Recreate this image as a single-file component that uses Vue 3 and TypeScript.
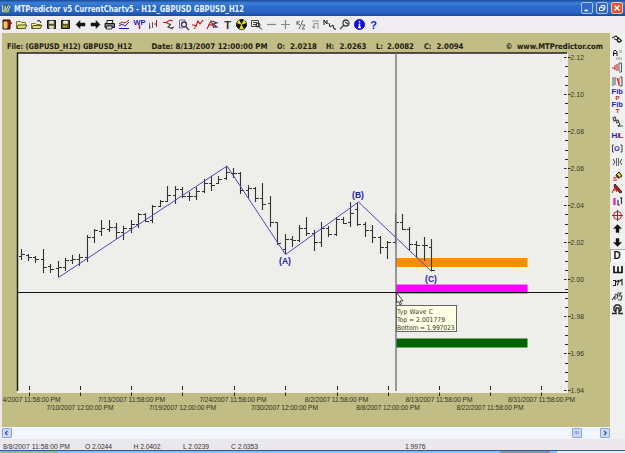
<script setup lang="ts">
interface Shape { d: string; c: string; f?: string; w?: number }
interface Glyph { t: string; x: number; y: number; c: string; s: number }
interface Icon { name: string; p?: Shape[]; g?: Glyph[] }

const K = '#151515'
const R = '#c01818'
const B = '#1c1cc8'

const tools: Icon[] = [
  { name: 'Exit', p: [{ d: 'M2 2h7v9H2z', c: K, f: '#8a2010' }, { d: 'M3 4h3v6H3z', c: '#e8c860', f: '#e8c860' }, { d: 'M11 5H7m2-2v4', c: '#b01010', w: 1.6 }] },
  { name: 'Open', p: [{ d: 'M1.5 3.5h4l1 1h4v6h-9z', c: '#77772a', f: '#f2eaa0' }, { d: 'M3 7h9l-2 3.500H2z', c: '#55551c', f: '#e5dc80' }] },
  { name: 'Open chart', p: [{ d: 'M1.5 5.5h4l1 1h4v4h-9z', c: '#77772a', f: '#f2eaa0' }, { d: 'M3 7.5h9l-2 3H2z', c: '#55551c', f: '#e5dc80' }, { d: 'M7 3q3-2 4 2', c: K }] },
  { name: 'Save', p: [{ d: 'M2.500 2.500h8v8h-8z', c: K, f: '#55551c' }, { d: 'M4.500 3h4v2.500h-4zM4.500 8h4v2.500h-4z', c: '#ddd', f: '#ddd', w: .6 }] },
  { name: 'Save as', p: [{ d: 'M2.500 2.500h8v8h-8z', c: K, f: '#55551c' }, { d: 'M4.500 3h4v2.500h-4z', c: '#eee', f: '#eee', w: .6 }, { d: 'M4 8.500h4', c: '#e0b030', w: 1.5 }] },
  { name: 'Back', p: [{ d: 'M2 6.500l4-4v2.500h5v3H6v2.500z', c: K, f: K, w: .5 }] },
  { name: 'Forward', p: [{ d: 'M11 6.500l-4-4v2.500H2v3h5v2.500z', c: K, f: K, w: .5 }] },
  { name: 'Print', p: [{ d: 'M4 5V2.500h6L9 5', c: K, f: '#fff' }, { d: 'M2 5.500h9.500v4H2z', c: K, f: '#777' }, { d: 'M4 8h5v3H3z', c: K, f: '#ddd', w: .8 }] },
  { name: 'Lines', p: [{ d: 'M1 6l3-2 3 1 4-3', c: R }, { d: 'M1 8l3-2 3 2 4-4M1 10.500h10', c: B }] },
  { name: 'Wave patterns', g: [{ t: 'WP', x: 6.5, y: 7, c: B, s: 7.5 }], p: [{ d: 'M6.500 7v4', c: R, w: 1.5 }] },
  { name: 'Bars', p: [{ d: 'M2.500 5v6M5.500 4v6M2 9h2', c: '#5c5c70' }, { d: 'M9.500 2v7M7 6h2', c: R }] },
  { name: 'Swing', p: [{ d: 'M1 4.500h3l4-2.500 3 1M4 4.500l4 2', c: R, w: 1.1 }, { d: 'M9 6l-3 3 5 2M9 10l3-1', c: '#444', w: 1.2 }] },
  { name: 'Zoom bar', p: [{ d: 'M2.500 2v8h3M3 2h5v2', c: '#66a' }, { d: 'M7 4a2.500 2.500 0 100 5 2.500 2.500 0 000-5M9 9l3 3', c: '#503050', w: 1.3 }] },
  { name: 'Wave', p: [{ d: 'M1 7h2l2 1 2-5 2 3 3-4', c: R, w: 1.2 }, { d: 'M3 11l3-4', c: R }] },
  { name: 'Analysis', p: [{ d: 'M1 11l4-8 3 7M2 7h5', c: R, w: 1.1 }, { d: 'M6 3l5 2-4 1 4 3H7', c: '#335', w: 1.1 }] },
  { name: 'Text', p: [], g: [{ t: 'T', x: 6.5, y: 10.5, c: '#2a3a2a', s: 11 }] },
  { name: 'Radar', p: [{ d: 'M6.500 1.500a5 5 0 100 10 5 5 0 000-10', c: '#111', f: '#111' }, { d: 'M6.500 6.500L2 5l2-3zM6.500 6.500L11 5 9 2zM6.500 6.500L4.500 11h4z', c: '#f4ee20', f: '#f4ee20', w: .3 }] },
  { name: 'Preview', p: [{ d: 'M1.500 2.500h7v6h-7zM3 4.500h4M3 6.500h4', c: '#444' }, { d: 'M8 5a2 2 0 100 4 2 2 0 000-4M9.500 9l2.500 2.500', c: K }] },
  { name: 'Minus', p: [{ d: 'M2 6.500h9', c: '#858585', w: 1.2 }] },
  { name: 'Plus', p: [{ d: 'M2 6.500h9M6.500 2v9', c: '#858585', w: 1.2 }] },
  { name: 'Half', p: [{ d: 'M3 3v4M6 3L3 5l3 2M9 2L5 11M8 7h3l-3 4h3', c: '#555', w: .9 }] },
  { name: 'Fit', p: [{ d: 'M3 3h7M5 5v6M5 6l4-1v6M3 9h3', c: '#888', w: .9 }] },
  { name: 'Wave count', p: [{ d: 'M1 7V2l3 4V2M6 5l1 4 3-2 1 4h2', c: K, w: 1 }] },
  { name: 'Search', p: [{ d: 'M8 2a3 3 0 100 6 3 3 0 000-6M6 7l-4 4M7 4l3 2', c: '#444', w: 1.3 }] },
  { name: 'Info', p: [{ d: 'M6.500 1.500a5 5 0 100 10 5 5 0 000-10', c: '#1010d8', f: '#1010d8' }, { d: 'M6.500 3v1.500M6.500 5.500v4M5 9.500h3', c: '#fff', w: 1.5 }] },
  { name: 'Help', g: [{ t: '?', x: 6.5, y: 10.5, c: B, s: 11 }] },
]

const sideTools: Icon[] = [
  { name: 'Pointer', p: [{ d: 'M1 4l4-2 6 5M3 5l4 1', c: '#333', w: 1.2 }, { d: 'M8 4a2 2 0 102 3', c: K, w: 1.4 }] },
  { name: 'Annotate', p: [{ d: 'M2.500 8V4l1.500-2L6 4v4M2.500 5.500h3', c: K }, { d: 'M5 10.500h6M8 3.500h3', c: '#c4c4c4', w: 3 }] },
  { name: 'Bracket left', p: [{ d: 'M1 7h3M4 4v5M6 3v7', c: R }, { d: 'M8 2v8M8 2h2.500v9H8', c: '#555' }] },
  { name: 'Bracket right', p: [{ d: 'M2 2v9M4 2v8', c: '#555' }, { d: 'M6 3l2 6M8 3v8', c: R }, { d: 'M9 2h2v9H9', c: '#444' }] },
  { name: 'Fib price', g: [{ t: 'Fib', x: 6.2, y: 6, c: B, s: 7.5 }, { t: 'P', x: 6.5, y: 11.8, c: R, s: 6 }] },
  { name: 'Fib time', g: [{ t: 'Fib', x: 6.2, y: 6, c: B, s: 7.5 }, { t: 'T', x: 6.5, y: 11.8, c: R, s: 6 }] },
  { name: 'Swing count', p: [{ d: 'M2 3l2-1 1 3-2 1zM5 6l2-1 1 2-2 1zM9 8l-1 3h4M7 10l1 2', c: '#444', w: 1.1 }] },
  { name: 'High low', g: [{ t: 'H/', x: 4.5, y: 9.5, c: B, s: 8 }, { t: 'L', x: 10, y: 9.5, c: R, s: 8 }] },
  { name: 'Range', p: [{ d: 'M3 3H1.500v7H3M9.500 3H11v7H9.500', c: '#444' }, { d: 'M6 4.500a2 2 0 100 4 2 2 0 000-4', c: '#4545d5', w: 1.2 }] },
  { name: 'Compress', p: [{ d: 'M2 4l2 3-2 3M11 4L9 7l2 3', c: '#444' }, { d: 'M5.500 3v8M7.500 3v8', c: '#666' }] },
  { name: 'Sell marker', p: [{ d: 'M5 6l3-3 3 4-3 2z', c: K, f: '#eadb15' }, { d: 'M5 6l3 3', c: '#502010', w: 2 }], g: [{ t: 'S', x: 4, y: 11.5, c: '#d02020', s: 6 }] },
  { name: 'Alert marker', p: [{ d: 'M4 2l7 8-2 1-6-7z', c: '#501818', f: '#b02020' }, { d: 'M1 11l3-6 2 5M2 8h4', c: R }] },
  { name: 'Bars', p: [{ d: 'M3.500 3v7', c: '#d020d0', w: 2.2 }, { d: 'M7 10.500V5M7 10h2M10.500 2v7M9 3h1.500', c: '#334', w: 1.2 }] },
  { name: 'Target', p: [{ d: 'M6.500 2.500a4 4 0 100 8 4 4 0 000-8M1 6.500h11', c: R }, { d: 'M6.500 1v11', c: '#444' }] },
  { name: 'Up', p: [{ d: 'M6.500 2.500l4 4H8v4H5v-4H2.500z', c: K, f: K, w: .4 }] },
  { name: 'Down', p: [{ d: 'M6.500 10.500l4-4H8v-4H5v4H2.500z', c: K, f: K, w: .4 }] },
  { name: 'Daily', g: [{ t: 'D', x: 6, y: 10.3, c: K, s: 10 }] },
  { name: 'Weekly', p: [{ d: 'M3 3v6.500h8V3M7 3.500v6', c: K, w: 1.7 }] },
  { name: 'Monthly', p: [{ d: 'M2 4.500h2.500v5H2M4.500 6l3-1.500-1 5M8 5.500l3-2v6', c: '#222', w: 1.1 }] },
  { name: 'Minutes', p: [{ d: 'M1 10l3-4v4M4 4l2 1M6 9l1-6h3L8 6h3l-1 4H7', c: '#444', w: 1.1 }] },
  { name: 'Alarm', p: [{ d: 'M1 10.500h4V9L3 7V4l2-2h3l2 2v3L8 9v1.500h4M5 8V5h3v3', c: '#222', w: 1.4 }] },
]

// [x, high, low, open, close] in plot pixels
const bars: number[][] = [
  [22, 249, 260, 256, 254], [29, 254, 261, 255, 257], [36, 256, 263, 257, 259], [44, 249, 273, 259, 267],
  [51, 264, 273, 266, 269], [59, 261, 277, 268, 267], [66, 258, 271, 267, 260], [73, 255, 264, 260, 259],
  [80, 254, 266, 259, 257], [88, 235, 262, 257, 237], [95, 229, 243, 237, 230], [102, 220, 236, 231, 228],
  [110, 220, 232, 229, 227], [117, 223, 239, 227, 232], [124, 226, 240, 232, 228], [132, 220, 233, 228, 224],
  [139, 213, 228, 224, 214], [146, 213, 222, 214, 221], [153, 205, 223, 220, 206], [161, 200, 207, 206, 201],
  [168, 186, 202, 201, 195], [176, 186, 204, 195, 189], [183, 187, 198, 189, 196], [190, 192, 201, 196, 196],
  [197, 187, 200, 196, 191], [205, 179, 193, 191, 183], [212, 176, 191, 183, 185], [219, 176, 184, 183, 179],
  [227, 166, 180, 178, 172], [234, 168, 178, 173, 173], [241, 172, 194, 173, 190], [249, 185, 198, 190, 188],
  [256, 187, 202, 188, 198], [263, 183, 210, 198, 204], [271, 196, 227, 203, 222], [278, 222, 245, 222, 243],
  [286, 234, 254, 249, 239], [293, 236, 247, 239, 240], [300, 225, 242, 240, 228], [307, 217, 236, 228, 233],
  [315, 230, 251, 233, 242], [322, 222, 247, 242, 228], [329, 226, 237, 228, 234], [337, 217, 236, 234, 219],
  [344, 217, 224, 219, 223], [351, 202, 227, 222, 213], [358, 202, 226, 209, 224], [366, 222, 237, 224, 230],
  [373, 225, 243, 230, 237], [381, 236, 254, 237, 247], [388, 241, 259, 247, 242], [396, 213, 244, 242, 222],
  [403, 214, 230, 222, 229], [410, 227, 250, 229, 244], [417, 241, 258, 244, 245], [425, 237, 261, 245, 245],
  [432, 239, 271, 247, 270],
]
const barPath = bars
  .map(([x, h, l, o, c]) => `M${x - .5} ${h}V${l}M${x - 3} ${o + .5}H${x}M${x} ${c + .5}H${x + 3}`)
  .join('')

const zones = [
  { y: 258, color: '#ff8c00' },
  { y: 284.5, color: '#ff00ff' },
  { y: 338.5, color: '#006400' },
]
const header = [
  { t: 'File: (GBPUSD_H12) GBPUSD_H12', x: 7, w: 125 },
  { t: 'Date: 8/13/2007 12:00:00 PM', x: 151.5, w: 116 },
  { t: 'O:', x: 277, w: 8 }, { t: '2.0218', x: 290, w: 27 },
  { t: 'H:', x: 326, w: 8 }, { t: '2.0263', x: 339.5, w: 27 },
  { t: 'L:', x: 376, w: 7 }, { t: '2.0082', x: 387, w: 27 },
  { t: 'C:', x: 424, w: 7.5 }, { t: '2.0094', x: 436.5, w: 27 },
  { t: '©', x: 505.5, w: 7 }, { t: 'www.MTPredictor.com', x: 517, w: 86 },
]
const priceLabels = ['2.12', '2.10', '2.08', '2.06', '2.04', '2.02', '2.00', '1.98', '1.96', '1.94']
  .map((text, i) => ({ text, y: 57.5 + i * 37.05 }))
const priceTicks = Array.from({ length: 37 }, (_, i) => ({ y: Math.round(57 + i * 9.26) + .5, major: i % 4 === 0 }))
const timeTicks = [29.5, 80.5, 131.5, 182.5, 234.5, 285.5, 337.5, 388.5, 439.5, 490.5, 541.5]
const timeLabels = [
  { t: '4/2007 11:58:00 PM', x: 31.5, y: 402 }, { t: '7/10/2007 12:00:00 PM', x: 80, y: 410 },
  { t: '7/13/2007 11:58:00 PM', x: 131.5, y: 402 }, { t: '7/19/2007 12:00:00 PM', x: 182.5, y: 410 },
  { t: '7/24/2007 11:58:00 PM', x: 233, y: 402 }, { t: '7/30/2007 12:00:00 PM', x: 284.5, y: 410 },
  { t: '8/2/2007 11:58:00 PM', x: 336.5, y: 402 }, { t: '8/8/2007 12:00:00 PM', x: 388, y: 410 },
  { t: '8/13/2007 11:58:00 PM', x: 439, y: 402 }, { t: '8/22/2007 11:58:00 PM', x: 490, y: 410 },
  { t: '8/31/2007 11:58:00 PM', x: 541.5, y: 402 },
]
const labelWidths: Record<number, number> = { 18: 58, 20: 63.5, 21: 67 }
const waves = [
  { t: '(A)', x: 285, y: 264 }, { t: '(B)', x: 358, y: 198 }, { t: '(C)', x: 431, y: 282 },
]
</script>

<template>
  <div class="window">
    <header class="titlebar">
      <svg class="logo" viewBox="0 0 12 12">
        <path d="M1 1h10v10H1z" fill="#2a6a70" />
        <path d="M2 2v8l3-3V3M6 9l3-7M8 10l3-7" stroke="#fff" fill="none" />
        <path d="M2 10h7M5 4v5" stroke="#e9d638" />
      </svg>
      <h1><svg class="title-text" viewBox="0 0 240 14"><text x="0" y="10.5" textLength="230" lengthAdjust="spacingAndGlyphs">MTPredictor v5 CurrentChartv5 - H12_GBPUSD GBPUSD_H12</text></svg></h1>
      <div class="controls">
        <button aria-label="Minimize"><svg viewBox="0 0 12 12"><path d="M3 9h4" stroke="#fff" stroke-width="2" /></svg></button>
        <button aria-label="Restore"><svg viewBox="0 0 12 12"><path d="M5 5V3h4.500v4.500H8M3 5.500h4.500V9H3z" stroke="#fff" fill="none" stroke-width="1.200" /></svg></button>
        <button class="close" aria-label="Close"><svg viewBox="0 0 12 12"><path d="M3 3l6 6M9 3l-6 6" stroke="#fff" stroke-width="1.700" /></svg></button>
      </div>
    </header>

    <nav class="toolbar">
      <button v-for="icon in tools" :key="icon.name" class="tool" :aria-label="icon.name">
        <svg viewBox="0 0 13 13">
          <path v-for="(s, i) in icon.p" :key="i" :d="s.d" :stroke="s.c" :fill="s.f ?? 'none'" :stroke-width="s.w ?? 1" />
          <text v-for="g in icon.g" :key="g.t" :x="g.x" :y="g.y" :fill="g.c" :font-size="g.s">{{ g.t }}</text>
        </svg>
      </button>
    </nav>

    <main class="body">
      <div class="left">
        <section class="panel">
          <svg class="chart" viewBox="2 33 608 394">
            <g class="info">
              <text v-for="h in header" :key="h.x" :x="h.x" y="48.7" :textLength="h.w" lengthAdjust="spacingAndGlyphs">{{ h.t }}</text>
            </g>
            <rect x="17" y="53" width="551" height="340" fill="#eeeeea" />
            <path d="M17.5 391V53H567" class="frame" />
            <rect v-for="z in zones" :key="z.color" x="396" :y="z.y" width="131.5" height="9" :fill="z.color" />
            <path :d="barPath" class="bars" />
            <path d="M58.5 277.5L227 166L285.5 254.500L358.5 202L431.5 271.500" class="swing" />
            <path d="M396 53V391" class="cross-v" />
            <path d="M18 292.5H568" class="cross-h" />
            <text v-for="w in waves" :key="w.t" :x="w.x" :y="w.y" class="wave">{{ w.t }}</text>
            <path v-for="t in priceTicks" :key="t.y" :d="t.major ? `M564 ${t.y}h2.500m1.500 0h2.500` : `M565 ${t.y}h3`" class="tick" />
            <text v-for="p in priceLabels" :key="p.text" :x="570.5" :y="p.y + 2.5" class="axis" textLength="13.5">{{ p.text }}</text>
            <path v-for="x in timeTicks" :key="x" :d="`M${x} 386v4m0 2.500v3.500`" class="tick" />
            <text v-for="l in timeLabels" :key="l.t" :x="l.x" :y="l.y" class="axis mid" :textLength="labelWidths[l.t.length]">{{ l.t }}</text>
            <g class="tip">
              <rect x="396.5" y="305.5" width="60" height="26" />
              <text x="397" y="313.5" textLength="36">Typ Wave C</text>
              <text x="397" y="321.5" textLength="48">Top = 2.001779</text>
              <text x="397" y="329.5" textLength="57.5">Bottom = 1.997023</text>
            </g>
            <path d="M396.500 293v10l2-2 1.500 4 1.500-.8-1.500-3.400h3z" fill="#fff" stroke="#222" stroke-width=".8" />
          </svg>
        </section>
        <div class="scrollbar">
          <button aria-label="Scroll left"><svg viewBox="0 0 10 10"><path d="M5.500 2.500L3 5l2.500 2.500" stroke="#33507c" fill="none" stroke-width="1.500" /></svg></button>
          <div class="track"><span class="thumb"><svg viewBox="0 0 10 10"><path d="M2.500 2.500v4M4.500 2.500v4M6.500 2.500v4" stroke="#7890b8" /></svg></span></div>
          <button aria-label="Scroll right"><svg viewBox="0 0 10 10"><path d="M4 2.500L6.500 5 4 7.500" stroke="#33507c" fill="none" stroke-width="1.500" /></svg></button>
        </div>
      </div>
      <aside class="side">
        <button v-for="icon in sideTools" :key="icon.name" class="tool" :class="{ active: icon.name === 'Daily' }" :aria-label="icon.name">
          <svg viewBox="0 0 13 13">
            <path v-for="(s, i) in icon.p" :key="i" :d="s.d" :stroke="s.c" :fill="s.f ?? 'none'" :stroke-width="s.w ?? 1" />
            <text v-for="g in icon.g" :key="g.t" :x="g.x" :y="g.y" :fill="g.c" :font-size="g.s">{{ g.t }}</text>
          </svg>
        </button>
      </aside>
    </main>

    <footer class="status">
      <svg viewBox="0 0 625 11">
        <text x="3" y="10" textLength="67">8/8/2007 11:58:00 PM</text>
        <text x="85" y="10" textLength="27">O 2.0244</text>
        <text x="133.5" y="10" textLength="27">H 2.0402</text>
        <text x="183" y="10" textLength="26">L 2.0239</text>
        <text x="231" y="10" textLength="27">C 2.0353</text>
        <text x="405" y="10" textLength="20.5">1.9976</text>
      </svg>
    </footer>
    <div class="taskbar"><i class="start"></i><i class="tasks"></i><i class="item"></i><i class="tasks short"></i><i class="tray"></i></div>
  </div>
</template>

<style>
body { margin: 0; overflow: hidden; }
</style>

<style scoped>
.window { display: flex; flex-direction: column; width: 625px; height: 453px; background: #ece9ed; font-family: "Liberation Sans", Arial, sans-serif; overflow: hidden; }
svg { display: block; }
button { padding: 0; border: 0; background: none; }
.titlebar { display: flex; align-items: center; flex: none; height: 16px; padding: 0 2px 0 1px; background: linear-gradient(#174a98 0, #3c7fd8 3px, #2a6bca 7px, #2a66c4 12px, #174a9c 16px); }
.logo { width: 10px; height: 11px; }
h1 { flex: 1; margin: 0 0 0 3px; }
.title-text { width: 240px; height: 14px; overflow: visible; font: bold 9px "DejaVu Sans Condensed", "DejaVu Sans", sans-serif; fill: #e9f2ff; }
.controls { display: flex; gap: 3px; }
.controls button { width: 12px; height: 12px; box-sizing: border-box; border: 1px solid #a9c5f0; border-radius: 2px; background: #3568c8; }
.controls .close { background: #dd5630; border-color: #f0c6b8; }
.toolbar { display: flex; flex: none; height: 17px; background: #efedf0; align-items: center; }
.tool text { font-family: "Liberation Sans", Arial, sans-serif; font-weight: bold; text-anchor: middle; }
.toolbar .tool { width: 14.67px; height: 13px; margin-top: -1px; }
.tool svg { width: 13px; height: 13px; margin: 0 auto; }
.body { display: flex; flex: none; height: 406px; }
.left { width: 608px; padding-left: 2px; }
.panel { height: 394px; background: #c1bd84; }
.chart { width: 608px; height: 394px; }
.info text { font: bold 7.8px "DejaVu Sans Condensed", "DejaVu Sans", Verdana, sans-serif; fill: #1b1b12; }
.frame { stroke: #222; stroke-width: 1.5; fill: none; }
.bars { stroke: #333; stroke-width: 1.1; fill: none; }
.swing { stroke: #4a4ab8; stroke-width: 1; fill: none; }
.cross-v { stroke: #777c80; stroke-width: 1.5; }
.cross-h { stroke: #111; stroke-width: 1; }
.wave { font: bold 8.5px "Liberation Sans", Arial, sans-serif; fill: #2323b0; text-anchor: middle; }
.tick { stroke: #26261c; stroke-width: 1; }
.axis { font-size: 6.7px; fill: #34341f; }
.mid { text-anchor: middle; }
.tip rect { fill: #ffffe4; stroke: #666; }
.tip text { font: 6.7px "DejaVu Sans Condensed", "DejaVu Sans", sans-serif; fill: #35352c; }
.scrollbar { display: flex; height: 12px; align-items: center; background: #f1f6fe; }
.scrollbar button, .thumb { width: 10px; height: 10px; box-sizing: border-box; border: 1px solid #8ba6d0; border-radius: 1px; background: #c9dbf9; }
.track { display: flex; flex: 1; justify-content: flex-end; padding-right: 18px; }
.side { display: flex; flex-direction: column; width: 15px; padding-top: 1px; background: #f1f0f1; }
.side .tool { width: 15px; height: 13.45px; flex: none; }
.side .active { background: #fbfbfb; box-shadow: inset 1px 1px #aaa; }
.status { flex: none; height: 11px; background: #eae8ec; }
.status svg { width: 625px; height: 11px; }
.status text { font-size: 6.8px; fill: #333; }
.taskbar { display: flex; flex: none; height: 3px; box-sizing: border-box; border-top: 1px solid #35588c; background: #7fc0ff; }
.start { width: 57px; background: #7dc87e; }
.tasks { flex: 1; }
.item { width: 50px; background: #8595a0; }
.tasks.short { flex: none; width: 7px; }
.tray { width: 68px; background: #eee; }
</style>
